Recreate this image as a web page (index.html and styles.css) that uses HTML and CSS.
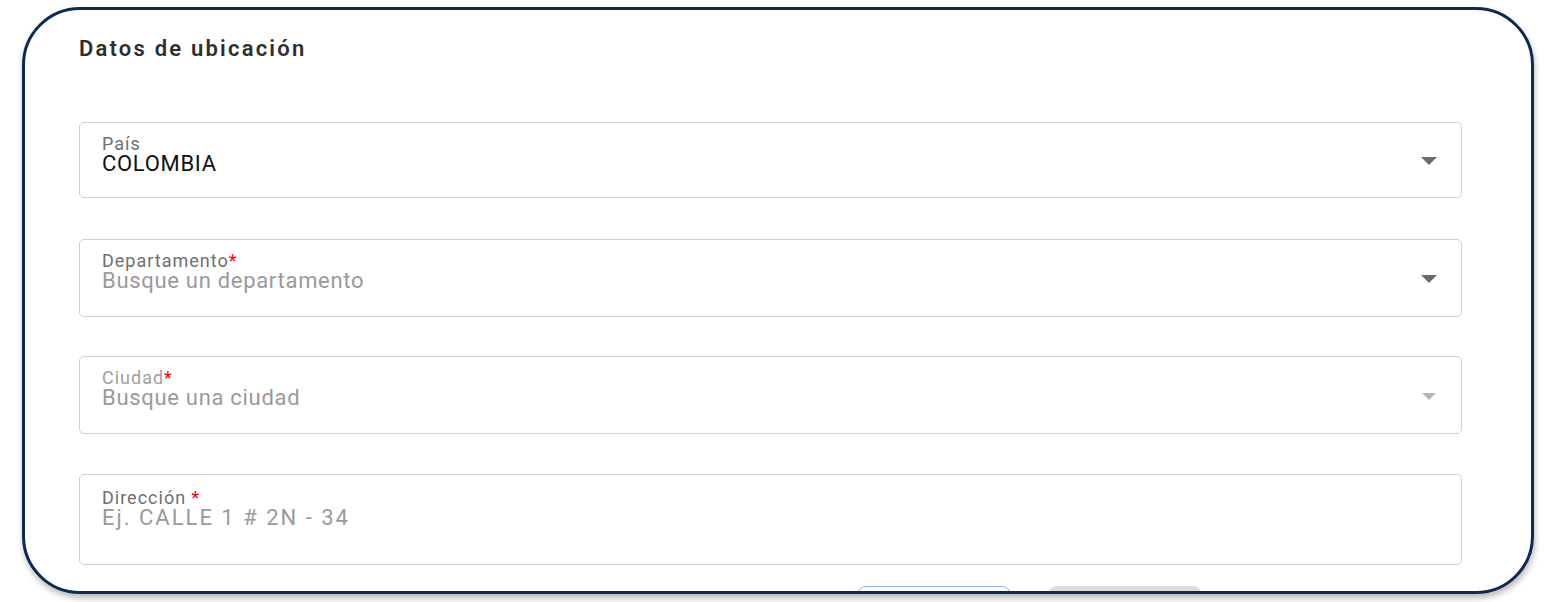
FILE: index.html
```html
<!DOCTYPE html>
<html lang="es">
<head>
<meta charset="utf-8">
<title>Datos de ubicación</title>
<link rel="stylesheet" href="styles.css">
</head>
<body>
<div class="page">
  <section class="card">
    <h2 class="title">Datos de ubicación</h2>

    <div class="field field-select f1">
      <div class="field-text">
        <label class="label">País</label>
        <div class="value">COLOMBIA</div>
      </div>
      <span class="arrow"></span>
    </div>

    <div class="field field-select f2">
      <div class="field-text">
        <label class="label">Departamento<span class="req">*</span></label>
        <div class="value placeholder">Busque un departamento</div>
      </div>
      <span class="arrow"></span>
    </div>

    <div class="field field-select f3 disabled">
      <div class="field-text">
        <label class="label">Ciudad<span class="req">*</span></label>
        <div class="value placeholder">Busque una ciudad</div>
      </div>
      <span class="arrow"></span>
    </div>

    <div class="field f4">
      <div class="field-text">
        <label class="label">Dirección <span class="req">*</span></label>
        <div class="value placeholder">Ej. CALLE 1 # 2N - 34</div>
      </div>
    </div>

    <div class="actions">
      <button class="btn btn-outline" aria-label="Cancelar"></button>
      <button class="btn btn-gray" aria-label="Guardar"></button>
    </div>
  </section>
</div>
</body>
</html>
```

FILE: styles.css
```css
html, body {
  margin: 0;
  padding: 0;
  background: #ffffff;
  font-family: Roboto, "Liberation Sans", Arial, sans-serif;
}

.page {
  padding: 7px 20px 0 22px;
  height: 602px;
  box-sizing: border-box;
}

.card {
  width: 1512px;
  height: 587px;
  box-sizing: border-box;
  border: 3px solid #0b2b52;
  border-radius: 58px;
  background: #ffffff;
  box-shadow: 1px 4px 6px rgba(0, 0, 0, 0.28);
  overflow: hidden;
  padding: 27px 69px 0 54px;
}

.title {
  margin: 0 0 61px 0;
  font-size: 22px;
  line-height: 24px;
  font-weight: 600;
  color: #2e2e2e;
  letter-spacing: 2.2px;
}

.field {
  box-sizing: border-box;
  border: 1.5px solid #d0d0d0;
  border-radius: 5px;
  display: flex;
  align-items: flex-start;
  padding: 12px 24px 0 22px;
}

.f1 { height: 76px; padding-top: 12px; margin-bottom: 41px; }
.f2 { height: 78px; padding-top: 12px; margin-bottom: 39px; }
.f3 { height: 78px; padding-top: 12px; margin-bottom: 40px; }
.f4 { height: 91px; padding-top: 14px; margin-bottom: 21px; }

.field-text {
  flex: 1;
  display: flex;
  flex-direction: column;
}

.label {
  font-size: 18px;
  line-height: 18px;
  color: #6f6f6f;
  letter-spacing: 1px;
}

.req {
  color: #ff0000;
  letter-spacing: 0;
}

.value {
  font-size: 22px;
  line-height: 24px;
  margin-top: -1px;
  color: #111111;
  letter-spacing: 0.7px;
}

.value.placeholder {
  color: #9a9a9a;
}

.f4 .value {
  letter-spacing: 2px;
}

.disabled .label { color: #a0a0a0; }

.arrow {
  align-self: center;
  width: 0;
  height: 0;
  border-left: 8px solid transparent;
  border-right: 8px solid transparent;
  border-top: 8px solid #6b6b6b;
  margin-top: -11px;
}

.disabled .arrow {
  border-left-width: 7px;
  border-right-width: 7px;
  border-top: 7px solid #b5b5b5;
  margin-right: 1px;
  margin-top: -9px;
}

.actions {
  display: flex;
  gap: 37px;
  padding-left: 778px;
}

.btn {
  width: 154px;
  height: 40px;
  border-radius: 9px;
  padding: 0;
}

.btn-outline {
  background: #ffffff;
  border: 1.5px solid #8fb3e3;
}

.btn-gray {
  background: #dcdcdc;
  border: 1.5px solid #dcdcdc;
}
```
